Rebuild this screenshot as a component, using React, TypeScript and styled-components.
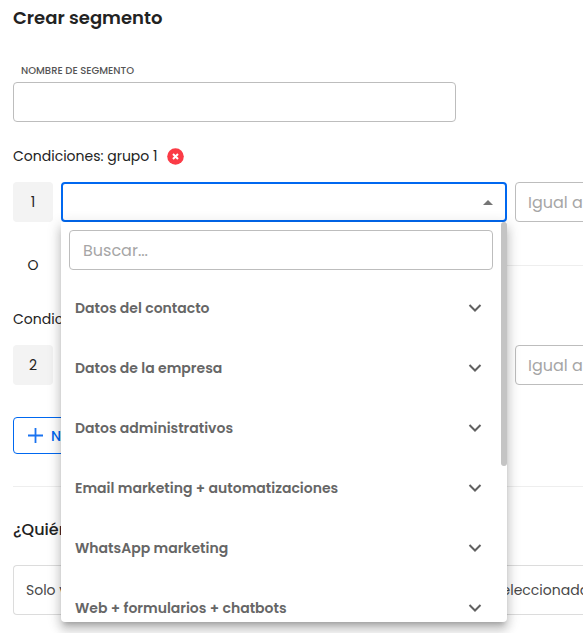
import React, { useState } from "react";
import styled, { createGlobalStyle } from "styled-components";

const GlobalStyle = createGlobalStyle`
  *, *::before, *::after { box-sizing: border-box; }
  body {
    margin: 0;
    background: #fff;
    color: #222;
    font-family: Poppins, Inter, "Open Sans", sans-serif;
    font-size: 14px;
    line-height: 20px;
  }
  button, input { font: inherit; color: inherit; }
`;

const Page = styled.main`
  padding: 6px 0 18px 13px;
  overflow: hidden;
`;

const Title = styled.h1`
  margin: 0 0 34px;
  font-size: 18px;
  font-weight: 600;
  line-height: 24px;
`;

const NameField = styled.div`
  display: flex;
  flex-direction: column;
  width: clamp(240px, 76vw, 443px);
`;

const NameLabel = styled.label`
  padding: 0 8px;
  margin-bottom: 5px;
  color: #555;
  font-size: 10px;
  font-weight: 500;
  line-height: 13px;
`;

const TextBox = styled.input`
  width: 100%;
  height: 40px;
  padding: 0 13px;
  border: 1px solid #bdbdbd;
  border-radius: 4px;
  background: #fff;
  font-size: 16px;
  outline: none;
  &::placeholder { color: #a6a6a6; opacity: 1; }
`;

const OperatorBox = styled(TextBox)`
  padding: 0 12px;
`;

const GroupHeading = styled.h2`
  display: flex;
  align-items: center;
  gap: 9px;
  margin: 24px 0 16px;
  font-size: 14px;
  font-weight: 400;
  line-height: 20px;
`;

const RemoveButton = styled.button`
  display: flex;
  padding: 0;
  border: 0;
  background: none;
  cursor: pointer;
`;

const ConditionRow = styled.div`
  display: grid;
  grid-template-columns: 40px clamp(240px, 78vw, 446px) minmax(200px, 1fr);
  gap: 8px;
`;

const IndexBadge = styled.span`
  display: flex;
  align-items: center;
  justify-content: center;
  height: 40px;
  border-radius: 4px;
  background: #f3f3f3;
`;

const Picker = styled.div`
  position: relative;
`;

const PickerButton = styled.button<{ $open?: boolean }>`
  display: flex;
  align-items: center;
  justify-content: flex-end;
  width: 100%;
  height: 40px;
  padding: 0 12px;
  border: ${(p) => (p.$open ? "2px solid #0068f0" : "1px solid #bdbdbd")};
  border-radius: 4px;
  background: #fff;
  cursor: pointer;
`;

const Menu = styled.div`
  position: absolute;
  z-index: 2;
  top: 100%;
  left: 0;
  width: 100%;
  height: 400px;
  padding: 8px 14px 0 8px;
  overflow: hidden;
  border-radius: 0 0 4px 4px;
  background: #fff;
  box-shadow: 0 5px 5px -3px rgba(0, 0, 0, 0.2), 0 8px 10px 1px rgba(0, 0, 0, 0.14),
    0 3px 14px 2px rgba(0, 0, 0, 0.12);
`;

const ScrollThumb = styled.span`
  position: absolute;
  top: 0;
  right: 0;
  width: 6px;
  height: 61%;
  border-radius: 3px;
  background: #c4c4c4;
`;

const Categories = styled.ul`
  margin: 8px 0 0;
  padding: 0;
  list-style: none;
`;

const Category = styled.button`
  display: flex;
  align-items: center;
  justify-content: space-between;
  width: 100%;
  height: 60px;
  padding: 0 11px 0 6px;
  border: 0;
  background: none;
  color: #666;
  font-weight: 600;
  text-align: left;
  cursor: pointer;
`;

const OrDivider = styled.div`
  display: flex;
  align-items: center;
  height: 20px;
  margin-top: 33px;
  &::after {
    content: "";
    flex: 1;
    margin-left: 8px;
    border-top: 1px solid #eee;
  }
`;

const OrText = styled.span`
  width: 40px;
  text-align: center;
`;

const SecondGroup = styled.section`
  margin-top: 34px;
  h2 { margin-top: 0; }
`;

const AddButton = styled.button`
  display: flex;
  align-items: center;
  gap: 8px;
  height: 37px;
  margin-top: 32px;
  padding: 0 14px;
  border: 1px solid #0068f0;
  border-radius: 4px;
  background: #fff;
  color: #0068f0;
  font-weight: 500;
  line-height: 18px;
  cursor: pointer;
`;

const Rule = styled.hr`
  margin: 32px 0;
  border: 0;
  border-top: 1px solid #eee;
`;

const Question = styled.h2`
  margin: 0 0 24px;
  font-size: 16px;
  font-weight: 500;
  line-height: 22px;
`;

const Notice = styled.p`
  display: flex;
  align-items: center;
  height: 50px;
  margin: 0;
  padding: 0 12px;
  border: 1px solid #dcdcdc;
  border-right: 0;
  border-radius: 4px 0 0 4px;
  color: #484848;
  white-space: nowrap;
`;

const categories = [
  "Datos del contacto",
  "Datos de la empresa",
  "Datos administrativos",
  "Email marketing + automatizaciones",
  "WhatsApp marketing",
  "Web + formularios + chatbots",
];

const Chevron = () => (
  <svg width="14" height="10" viewBox="0 0 14 10" fill="none" aria-hidden="true">
    <path d="M1.5 2 7 7.5 12.5 2" stroke="#616161" strokeWidth="2" />
  </svg>
);

const Caret = () => (
  <svg width="10" height="5" viewBox="0 0 10 5" aria-hidden="true">
    <path d="M0 5 5 0l5 5z" fill="#757575" />
  </svg>
);

const RemoveIcon = () => (
  <svg width="17" height="17" viewBox="0 0 17 17" aria-hidden="true">
    <circle cx="8.5" cy="8.5" r="8.3" fill="#fb3b46" />
    <path d="m6 6 5 5m0-5-5 5" stroke="#fff" strokeWidth="2" />
  </svg>
);

const PlusIcon = () => (
  <svg width="15" height="15" viewBox="0 0 15 15" aria-hidden="true">
    <path d="M7.5 0v15M0 7.5h15" stroke="#1a73f0" strokeWidth="1.8" />
  </svg>
);

export default function App() {
  const [open, setOpen] = useState(true);
  return (
    <>
      <GlobalStyle />
      <Page>
        <Title>Crear segmento</Title>
        <NameField>
          <NameLabel htmlFor="segment-name">NOMBRE DE SEGMENTO</NameLabel>
          <TextBox id="segment-name" />
        </NameField>

        <section>
          <GroupHeading>
            Condiciones: grupo 1
            <RemoveButton type="button" aria-label="Eliminar grupo 1">
              <RemoveIcon />
            </RemoveButton>
          </GroupHeading>
          <ConditionRow>
            <IndexBadge>1</IndexBadge>
            <Picker>
              <PickerButton
                type="button"
                $open={open}
                aria-label="Campo de la condición 1"
                aria-expanded={open}
                onClick={() => setOpen(!open)}
              >
                <Caret />
              </PickerButton>
              {open && (
                <Menu>
                  <TextBox type="search" aria-label="Buscar" placeholder="Buscar..." />
                  <Categories>
                    {categories.map((name) => (
                      <li key={name}>
                        <Category type="button">
                          {name}
                          <Chevron />
                        </Category>
                      </li>
                    ))}
                  </Categories>
                  <ScrollThumb />
                </Menu>
              )}
            </Picker>
            <OperatorBox aria-label="Operador de la condición 1" placeholder="Igual a" />
          </ConditionRow>
        </section>

        <OrDivider>
          <OrText>O</OrText>
        </OrDivider>

        <SecondGroup>
          <GroupHeading>Condiciones: grupo 2</GroupHeading>
          <ConditionRow>
            <IndexBadge>2</IndexBadge>
            <Picker>
              <PickerButton type="button" aria-label="Campo de la condición 2" />
            </Picker>
            <OperatorBox aria-label="Operador de la condición 2" placeholder="Igual a" />
          </ConditionRow>
        </SecondGroup>

        <AddButton type="button">
          <PlusIcon />
          Nuevo grupo
        </AddButton>
        <Rule />
        <Question>¿Quiénes entran en el segmento?</Question>
        <Notice>Solo van a estar todos los contactos que cumplan las condiciones seleccionadas</Notice>
      </Page>
    </>
  );
}
